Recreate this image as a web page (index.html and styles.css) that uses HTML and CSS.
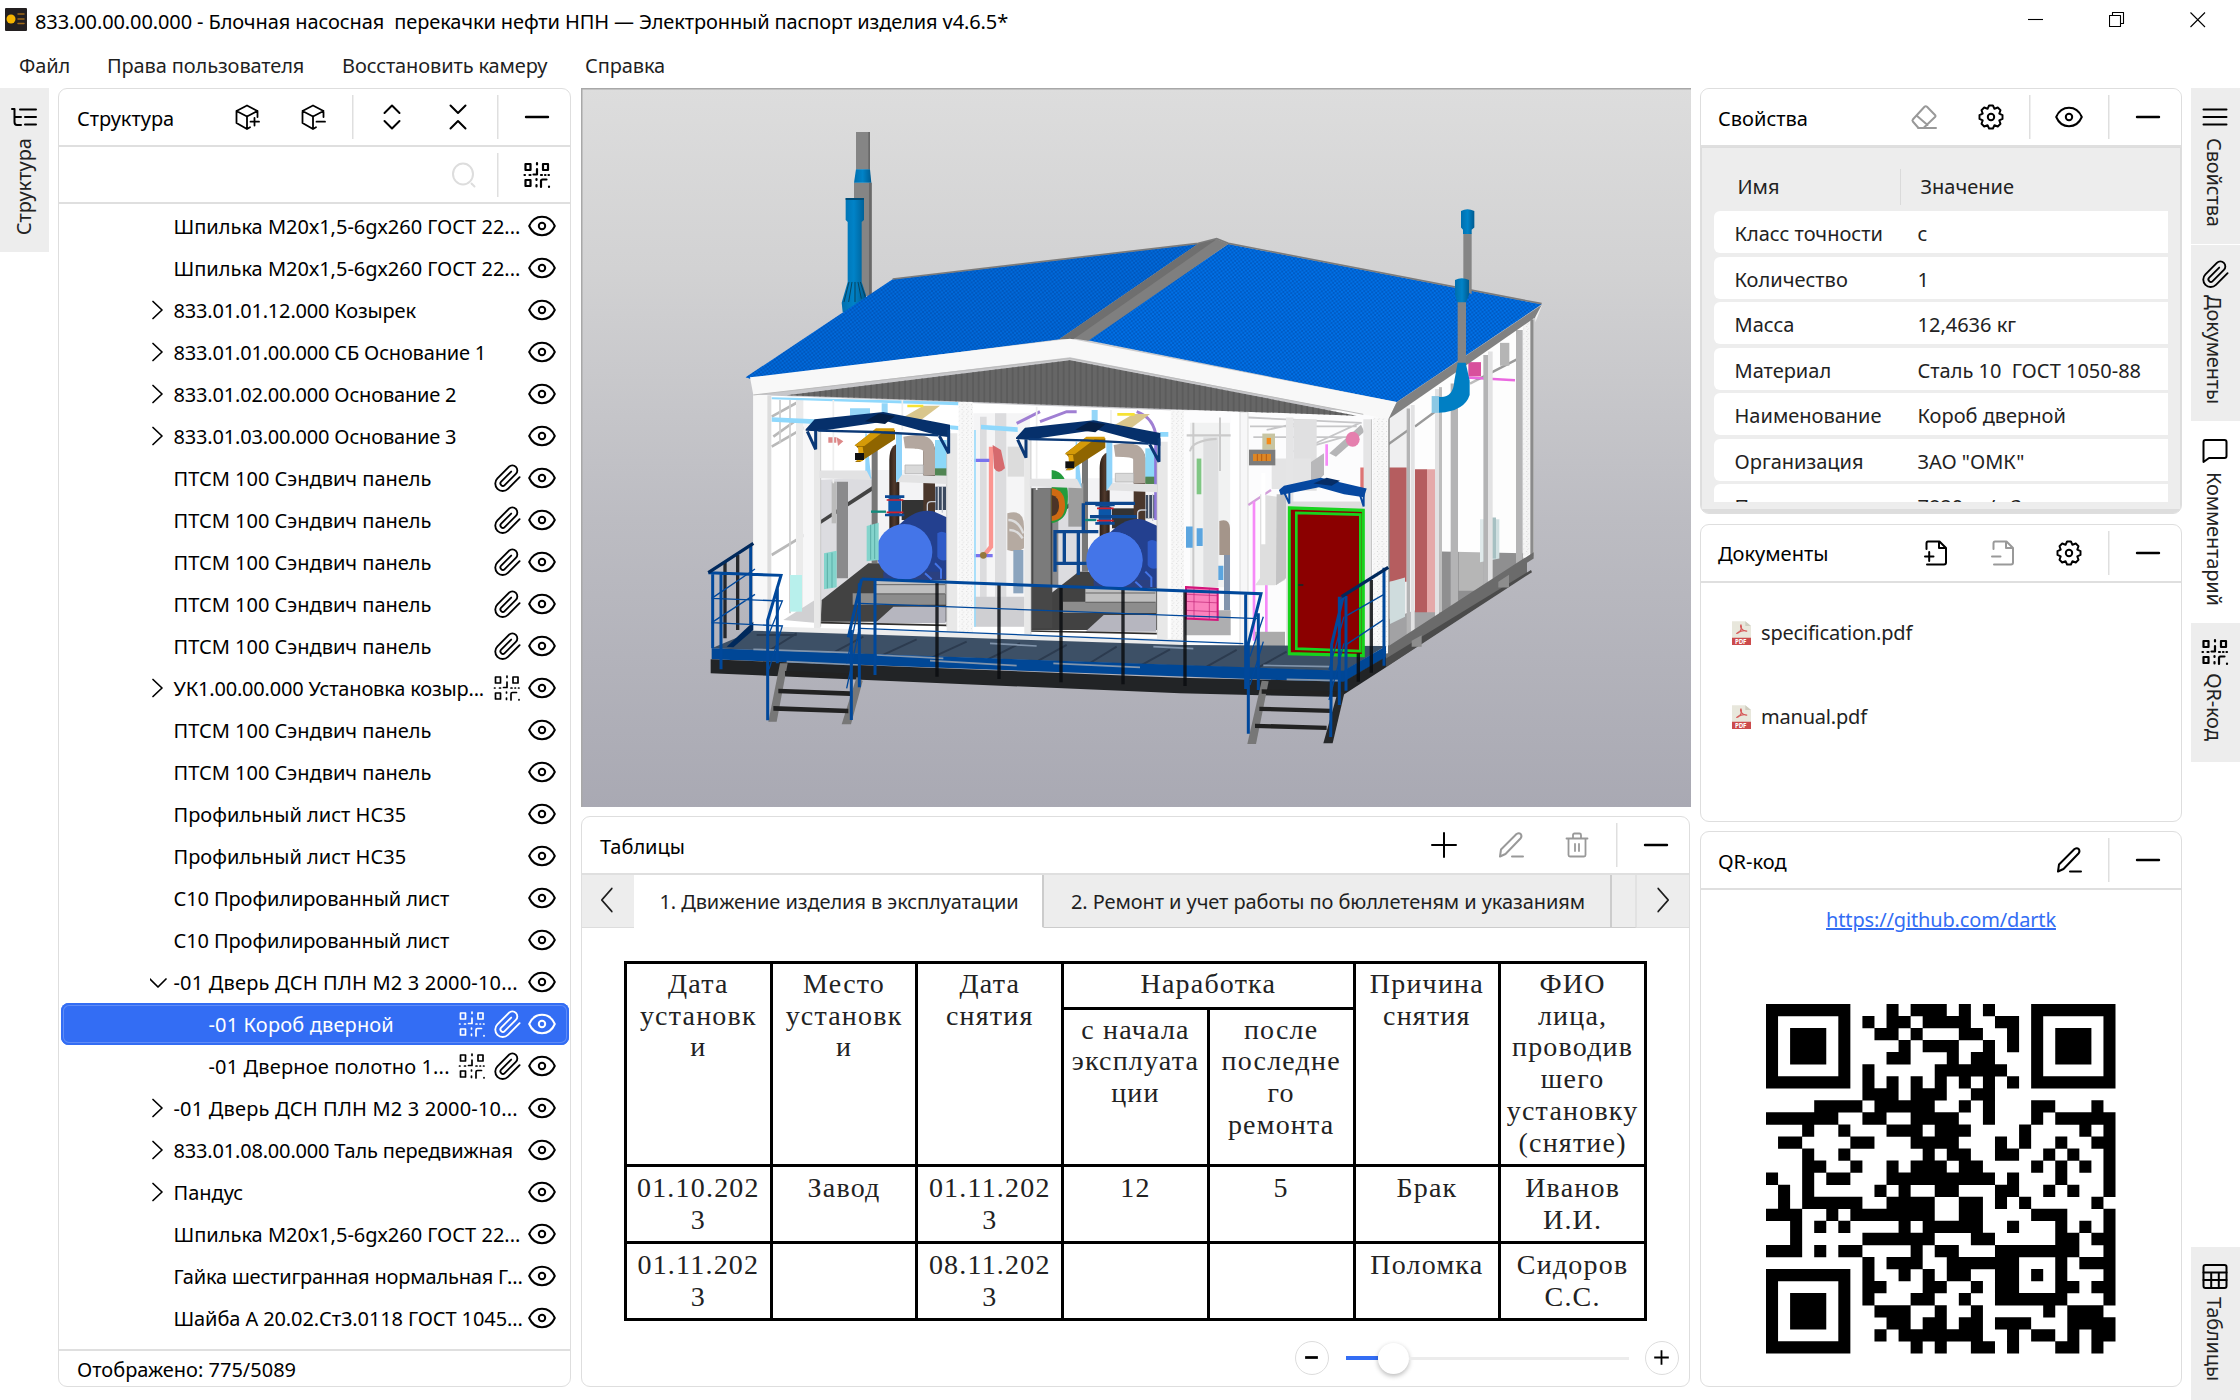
FILE: index.html
```html
<!DOCTYPE html>
<html lang="ru">
<head>
<meta charset="utf-8">
<title>Электронный паспорт изделия</title>
<link rel="stylesheet" href="styles.css">
</head>
<body>
<svg class="defs" width="0" height="0">
  <symbol id="eye" viewBox="0 0 28 28"><path d="M1.2 14C4 7.500 8.500 4.800 14 4.800s10 2.700 12.800 9.200C24 20.500 19.500 23.200 14 23.200S4 20.500 1.200 14z"/><circle cx="14" cy="14" r="3.200"/></symbol>
  <symbol id="clip" viewBox="0.500 0 24 24"><path d="M23.300 11.300l-10 10a6.300 6.300 0 0 1-9-9l9.800-9.800a4.200 4.200 0 0 1 6 6l-9.600 9.600a2.100 2.100 0 0 1-3-3l8.600-8.600" stroke-width="1.600"/></symbol>
  <symbol id="qr" viewBox="0 0 28 28"><path d="M2.500 3h5v6h-5zM20 3h5v6h-5zM2.500 19h5v6h-5zM14 2v1.500M14 8v5.500h-3.500M1.500 14h.5M6.500 14h1M18 14h1M22 14h.5M25.500 14h.5M13.500 18v1M13.500 24v1.500M18 26v-6q0-1.500 1.500-1.500h4M26 25.500v.5"/></symbol>
  <symbol id="gear" viewBox="-14 -14 28 28"><path transform="scale(.96)" d="M-2-12L2-12 3.570-8.620 7.070-9.900 9.900-7.070 8.620-3.570 12-2 12 2 8.620 3.570 9.900 7.070 7.070 9.900 3.570 8.620 2 12-2 12-3.570 8.620-7.070 9.900-9.900 7.070-8.620 3.570-12 2-12-2-8.620-3.570-9.900-7.070-7.070-9.900-3.570-8.620Z"/><circle r="3.200"/></symbol>
  <symbol id="minus" viewBox="0 0 28 28"><path d="M3 14h22" stroke-width="2.400"/></symbol>
  <symbol id="plus" viewBox="0 0 28 28"><path d="M14 2v24M2 14h24"/></symbol>
  <symbol id="cube-plus" viewBox="0 0 28 28"><path d="M14 26L3.500 20V8L14 2.500 24.500 8v6M3.500 8L14 13.500 24.500 8M14 13.500V26l3-1.800M21.500 15v7.500M17.500 18.700h8.500" stroke-width="1.800"/></symbol>
  <symbol id="cube-minus" viewBox="0 0 28 28"><path d="M14 26L3.500 20V8L14 2.500 24.500 8v6M3.500 8L14 13.500 24.500 8M14 13.500V26l3-1.800M17.500 18.700h8.500" stroke-width="1.800"/></symbol>
  <symbol id="expand" viewBox="0 0 28 28"><path d="M6.500 10L14 2.500 21.500 10M6.500 18l7.500 7.500 7.500-7.500"/></symbol>
  <symbol id="collapse" viewBox="0 0 28 28"><path d="M6.500 2.500L14 10l7.500-7.500M6.500 25.500L14 18l7.500 7.500"/></symbol>
  <symbol id="search" viewBox="0 0 28 28"><ellipse cx="13" cy="13" rx="10" ry="10.500"/><path d="M21.500 22.500l3 3"/></symbol>
  <symbol id="chev" viewBox="0 0 24 28"><path d="M3 5.500L12 14l-9 8.500" stroke-width="1.700"/></symbol>
  <symbol id="chev-open" viewBox="0 0 24 28"><path d="M0 11l8 8 8-8" stroke-width="1.700"/></symbol>
  <symbol id="eraser" viewBox="0 0 28 28"><path d="M8.500 25L2.800 18.500q-.8-1 0-2L14.500 3.800q1.200-1.200 2.500 0L25 12q1 1 0 2L13.500 25M6.500 12.500L17.500 22M8 25h18"/></symbol>
  <symbol id="pencil" viewBox="0 0 28 28"><path d="M3 25.500l1-7L19.500 3q2.500-1.500 4.200 0 1.500 2 0 4.200L8.500 23zM15 25.500h11"/></symbol>
  <symbol id="trash" viewBox="0 0 28 28"><path d="M3.500 7.500h21M5.500 7.500V24q0 1.500 1.500 1.500h14q1.500 0 1.500-1.500V7.500M10 7.500V4q0-1.500 1.500-1.500h5Q18 2.500 18 4v3.500M12 13v7M16 13v7" stroke-width="1.800"/></symbol>
  <symbol id="doc-plus" viewBox="0 0 28 28"><path d="M4.500 10V4.500Q4.500 2.500 6 2.500h11.500L24 9v14.500q0 2-2 2H5M17 2.500V9h7M3 17.500h8.500M7.200 13v9"/></symbol>
  <symbol id="doc-minus" viewBox="0 0 28 28"><path d="M4.500 10V4.500Q4.500 2.500 6 2.500h11.500L24 9v14.500q0 2-2 2H5M17 2.500V9h7M3 17.500h8.500"/></symbol>
  <symbol id="tree" viewBox="0 0 28 28"><path d="M2 6h2.500v13Q4.500 22 7 22h4M4.500 14H11M10 6.500h16M15 14h11M15 21.500h11"/></symbol>
  <symbol id="lines" viewBox="0 0 28 28"><path d="M2.500 6.500h23M2.500 14h23M2.500 21.500h23"/></symbol>
  <symbol id="comment" viewBox="0 0 28 28"><path d="M2.500 25V5Q2.500 3 4.500 3h19q2 0 2 2v14q0 2-2 2H8z"/></symbol>
  <symbol id="grid" viewBox="0 0 28 28"><rect x="2.500" y="3" width="23" height="23" rx="2"/><path d="M2.500 10.500h23M2.500 18h23M10.200 10.500V26M17.800 10.500V26"/></symbol>
  <symbol id="pdf" viewBox="0 0 20 25"><path d="M0 0h14l6 5v20H0z" fill="#e8e7dc" stroke="none"/><path d="M14 0v5h6z" fill="#cfcdbf" stroke="none"/><path d="M5 13c4-1 6-6 4.500-9C8 6 11 11 15.500 10.500 12 9 7 11 5 13z" stroke="#d65a5a" stroke-width="1.300"/><path d="M0 17.500h20V25H0z" fill="#cc4b4c" stroke="none"/><text x="3.200" y="23.700" font-size="6.500" font-weight="700" fill="#fff" stroke="none">PDF</text></symbol>
</svg>

<header class="titlebar">
  <svg class="app-icon" viewBox="0 0 22 23"><rect width="22" height="23" rx="1" fill="#231f20"/><circle cx="6" cy="11" r="4.500" fill="#f5b400"/><path d="M13 6h6M13 11h6M13 15.500h6" stroke="#a06a18" stroke-width="1.500"/></svg>
  <h1 class="title">833.00.00.00.000 - Блочная насосная&nbsp; перекачки нефти НПН — Электронный паспорт изделия v4.6.5*</h1>
  <div class="window-buttons">
    <svg viewBox="0 0 16 16"><path d="M0 7.500h15"/></svg>
    <svg viewBox="0 0 16 16"><path d="M.5 3.500h11v11H.5zM3.500 3.500v-3h11v11h-3"/></svg>
    <svg viewBox="0 0 16 16"><path d="M.5.500l14.500 14.500M15 .5L.5 15"/></svg>
  </div>
</header>
<nav class="menubar"><a class="m1">Файл</a><a class="m2">Права пользователя</a><a class="m3">Восстановить камеру</a><a class="m4">Справка</a></nav>

<main class="workspace">
  <aside class="rail rail-left"><div class="tab tab-structure"><svg class="icon"><use href="#tree"/></svg><span>Структура</span></div></aside>

  <section class="panel structure">
    <div class="head"><h2>Структура</h2>
      <i class="btn"><svg class="icon"><use href="#cube-plus"/></svg></i><i class="btn"><svg class="icon"><use href="#cube-minus"/></svg></i><i class="sep"></i>
      <i class="btn"><svg class="icon"><use href="#expand"/></svg></i><i class="btn"><svg class="icon"><use href="#collapse"/></svg></i><i class="sep"></i>
      <i class="btn"><svg class="icon"><use href="#minus"/></svg></i></div>
    <div class="search"><i class="btn pale"><svg class="icon"><use href="#search"/></svg></i><i class="sep"></i><i class="btn"><svg class="icon bold"><use href="#qr"/></svg></i></div>
    <ul class="tree">
      <li><b></b><span>Шпилька М20х1,5-6gх260 ГОСТ 22...</span><svg><use href="#eye"/></svg></li>
      <li><b></b><span>Шпилька М20х1,5-6gх260 ГОСТ 22...</span><svg><use href="#eye"/></svg></li>
      <li class="num"><b><svg><use href="#chev"/></svg></b><span>833.01.01.12.000 Козырек</span><svg><use href="#eye"/></svg></li>
      <li class="num"><b><svg><use href="#chev"/></svg></b><span>833.01.01.00.000 СБ Основание 1</span><svg><use href="#eye"/></svg></li>
      <li class="num"><b><svg><use href="#chev"/></svg></b><span>833.01.02.00.000 Основание 2</span><svg><use href="#eye"/></svg></li>
      <li class="num"><b><svg><use href="#chev"/></svg></b><span>833.01.03.00.000 Основание 3</span><svg><use href="#eye"/></svg></li>
      <li><b></b><span>ПТСМ 100 Сэндвич панель</span><svg><use href="#clip"/></svg><svg><use href="#eye"/></svg></li>
      <li><b></b><span>ПТСМ 100 Сэндвич панель</span><svg><use href="#clip"/></svg><svg><use href="#eye"/></svg></li>
      <li><b></b><span>ПТСМ 100 Сэндвич панель</span><svg><use href="#clip"/></svg><svg><use href="#eye"/></svg></li>
      <li><b></b><span>ПТСМ 100 Сэндвич панель</span><svg><use href="#clip"/></svg><svg><use href="#eye"/></svg></li>
      <li><b></b><span>ПТСМ 100 Сэндвич панель</span><svg><use href="#clip"/></svg><svg><use href="#eye"/></svg></li>
      <li class="num"><b><svg><use href="#chev"/></svg></b><span>УК1.00.00.000 Установка козыр...</span><svg class="thin"><use href="#qr"/></svg><svg><use href="#eye"/></svg></li>
      <li><b></b><span>ПТСМ 100 Сэндвич панель</span><svg><use href="#eye"/></svg></li>
      <li><b></b><span>ПТСМ 100 Сэндвич панель</span><svg><use href="#eye"/></svg></li>
      <li><b></b><span>Профильный лист НС35</span><svg><use href="#eye"/></svg></li>
      <li><b></b><span>Профильный лист НС35</span><svg><use href="#eye"/></svg></li>
      <li class="near"><b></b><span>С10 Профилированный лист</span><svg><use href="#eye"/></svg></li>
      <li class="near"><b></b><span>С10 Профилированный лист</span><svg><use href="#eye"/></svg></li>
      <li class="door"><b><svg><use href="#chev-open"/></svg></b><span>-01 Дверь ДСН ПЛН М2 3 2000-10...</span><svg><use href="#eye"/></svg></li>
      <li class="child selected"><span>-01 Короб дверной</span><svg class="thin"><use href="#qr"/></svg><svg><use href="#clip"/></svg><svg><use href="#eye"/></svg></li>
      <li class="child"><span>-01 Дверное полотно 1...</span><svg class="thin"><use href="#qr"/></svg><svg><use href="#clip"/></svg><svg><use href="#eye"/></svg></li>
      <li class="door"><b><svg><use href="#chev"/></svg></b><span>-01 Дверь ДСН ПЛН М2 3 2000-10...</span><svg><use href="#eye"/></svg></li>
      <li class="num"><b><svg><use href="#chev"/></svg></b><span>833.01.08.00.000 Таль передвижная</span><svg><use href="#eye"/></svg></li>
      <li><b><svg><use href="#chev"/></svg></b><span>Пандус</span><svg><use href="#eye"/></svg></li>
      <li><b></b><span>Шпилька М20х1,5-6gх260 ГОСТ 22...</span><svg><use href="#eye"/></svg></li>
      <li class="num"><b></b><span>Гайка шестигранная нормальная Г...</span><svg><use href="#eye"/></svg></li>
      <li class="near"><b></b><span>Шайба А 20.02.Ст3.0118 ГОСТ 1045...</span><svg><use href="#eye"/></svg></li>
    </ul>
    <footer>Отображено: 775/5089</footer>
  </section>

  <div class="center">
    <svg class="scene" viewBox="581 88 1110 719">
      <defs>
        <linearGradient id="sky" x1="0" y1="0" x2="0" y2="1"><stop offset="0" stop-color="#dddddd"/><stop offset=".25" stop-color="#d2d2d3"/><stop offset=".6" stop-color="#bcbcc2"/><stop offset="1" stop-color="#a9a9b3"/></linearGradient>
        <pattern id="tile" width="12" height="12" patternUnits="userSpaceOnUse" patternTransform="rotate(8)"><path d="M0 3h6M6 9h6" stroke="#003f94" stroke-width="2.500"/></pattern>
        <pattern id="ribs" width="17" height="17" patternUnits="userSpaceOnUse"><path d="M3 0v17" stroke="#585858" stroke-width="4"/></pattern>
        <pattern id="dots" width="14" height="14" patternUnits="userSpaceOnUse"><path d="M3 3l3 3M10 10l-3 3" stroke="#c4c4c4" stroke-width="2"/></pattern>
        <linearGradient id="pipe"><stop offset="0" stop-color="#006fae"/><stop offset=".5" stop-color="#0083c8"/><stop offset="1" stop-color="#005b90"/></linearGradient>
        <linearGradient id="brown"><stop offset="0" stop-color="#2b1e17"/><stop offset=".5" stop-color="#513a2d"/><stop offset="1" stop-color="#2b1e17"/></linearGradient>
        <g id="bay">
          <path d="M390 270h380v455H390z" fill="#f3f3f5"/>
          <path d="M392 300l155-10v295l-155 80z" fill="#dcdce0"/>
          <path d="M392 420l155-102v14L392 432z" fill="#444"/>
          <path d="M440 305h34v290h-34z" fill="#8a8a8c"/><path d="M545 180h18v370h-18z" fill="#777"/><path d="M425 305h14v125h-14z" fill="#bbb"/>
          <path d="M395 660l140-110h100v-10h135v185H392z" fill="#424242"/>
          <path d="M635 360h70v60h-70z" fill="#333"/>
          <path d="M598 450v-210q0-45 30-50v260z" fill="url(#brown)"/>
          <path d="M700 400V210q0-10-25-5l-5-25q60-15 65 30v190z" fill="#4a372c"/>
          <path d="M640 170q90-20 95 40v75h-35v-70q0-10-55-10z" fill="#b3a79f"/>
          <path d="M735 180h36v90h-36z" fill="#8cd8f8"/><path d="M735 265h36v22h-36z" fill="#518553"/>
          <path d="M585 350h58M585 405h58" stroke="#0b4a95" stroke-width="8"/><path d="M595 355h38v46h-38z" fill="#0b56a8"/><path d="M590 360h50M590 397h50" stroke="#d21f28" stroke-width="5"/><path d="M543 395h45" stroke="#138a7c" stroke-width="7"/>
          <path d="M736 320h32v70h-32z" fill="#3c4a60"/><path d="M712 395v-20q0-10 12-10h14M745 320v70M757 318v80" fill="none" stroke="#c8ccd4" stroke-width="4"/>
          <path d="M620 442q55-60 110-48l40 18v185l-60 5z" fill="#23408f"/><path d="M742 460q12-10 28 0v80q-20 5-28-10z" fill="#2f5bc8"/>
          <path d="M580 575h180v25H580z" fill="#2b4080"/><circle cx="643" cy="516" r="84" fill="#4475e8"/>
          <path d="M735 550l18 18v28M705 580l20 18" stroke="#4475e8" stroke-width="6" fill="none"/>
          <path d="M555 600h212v42H555z" fill="#bfbfbf"/><path d="M488 640h279v34H488z" fill="#8d8d8d"/><path d="M555 614h210M555 642h210" stroke="#666" stroke-width="3"/><path d="M610 680h157v50H555z" fill="#b6b6bf"/>
          <path d="M390 728l380 8" stroke="#302e2c" stroke-width="5"/>
        </g>
        <g id="bay-front">
          <path d="M530 160l14 140-18-20V160zM618 160h18v130l-18 18z" fill="#8fd4fb"/>
          <path d="M372 150h20v600h-20zM770 160h32v600h-32z" fill="#e8e8e8"/><path d="M392 150v590M770 200v540" stroke="#bbb" stroke-width="2"/>
          <path d="M388 272h142l14 28-156-6zM636 284l134 4v24l-150-6z" fill="#e2e2e3"/>
          <path d="M645 255h55v26h-55z" fill="#d9d9d9" stroke="#aaa"/>
          <path d="M495 195l60-45h60v28l-105 68h-15l12-10v-28z" fill="#8f6500"/><path d="M493 198h30l60-45h30v-8h-55z" fill="#d49a08"/><path d="M498 244h18l7-6-5-38h-14l3 36z" fill="#e0a30c"/><path d="M495 219h27v21h-27z" fill="#111"/>
          <path d="M347 148l27-30 206-22 200 38v38l-30-4-160-44-205 30-38-2z" fill="#06306b"/><path d="M525 124l42-24 48 8-30 24z" fill="#051f45"/>
          <path d="M385 152l170 4 190 10" stroke="#0a3876" stroke-width="7" fill="none"/><path d="M352 154l25 54v-55M748 168l28 52v-70" fill="none" stroke="#0a3876" stroke-width="9"/>
        </g>
      </defs>
      <rect x="581" y="88" width="1110" height="719" fill="url(#sky)"/>
      <path d="M581 88.500h1110M581.500 88v719" stroke="#a8a8a8" fill="none"/>

      <!-- rear chimneys -->
      <g transform="translate(700 110) scale(.33333)">
        <path d="M468 66h42v112h-42zM462 218h53v340h-53z" fill="#858585"/><path d="M505 66h5v112h-5zM507 218h8v340h-8z" fill="#696969"/>
        <path d="M468 178h42l4 40h-52z" fill="url(#pipe)"/><path d="M437 264h55v66l-7 6v180l13 40v50h-70l-3-28 18-62V336l-6-6z" fill="url(#pipe)"/>
        <path d="M437 264h55v6h-55z" fill="#004d78"/><path d="M447 516l-15 60M456 516l-10 60M465 516v60M474 516l10 50M481 516l15 46" stroke="#06435f" stroke-width="3"/>
      </g>

      <!-- side wall -->
      <g transform="translate(1180 180) scale(.33333 .35714)">
        <path d="M622 665l440-285v675L618 1340z" fill="#fdfdfd"/>
        <path d="M630 660l60-40v580l-60 60z" fill="#efeff0"/>
        <path d="M785 1040l245 5v45L785 1220z" fill="#8f8f90"/><path d="M625 1230l160-50v50l-160 110z" fill="#a2a2a4"/>
        <path d="M625 805h55v320h-55z" fill="#b55d5f"/><path d="M705 810h36v400h-36z" fill="#b55d5f"/><path d="M741 810h24v400h-24z" fill="#e5a9a9"/>
        <path d="M630 1125l45-12v110l-45 20z" fill="#cfdcdd"/><path d="M900 950h58v110l-58 10z" fill="#cfdfe0"/><path d="M930 945h18v115h-18z" fill="#a6c0c2"/>
        <path d="M625 740l60-40M705 690l70-48M870 570l145-70" stroke="#9a9a9a" stroke-width="7"/><path d="M860 553l145 8" stroke="#ea68e0" stroke-width="7"/><path d="M865 510h38v40h-38z" fill="#d8509c"/><path d="M960 456h28v64h-28z" fill="#b5b5b5"/>
        <path d="M680 640h10v640h-10zM812 570h22v640h-22zM910 490h14v650h-14zM1008 420h20v660h-20z" fill="#b4b4b5"/>
        <path d="M692 630h12v640h-12zM765 585h12v640h-12zM924 480h14v650h-14z" fill="#e2e2e3"/><path d="M777 580h9v630h-9z" fill="#bdbdbd"/>
        <path d="M836 560h74v590h-74z" fill="#fff" opacity=".35"/><path d="M1029 408l22-14v650l-22 14z" fill="#f5f5f5"/><path d="M1029 408l22-14v650l-22 14z" fill="url(#dots)"/><path d="M1051 390h10v665h-10z" fill="#8b8b8b"/>
        <path d="M622 665h7v665h-9z" fill="#858585"/>
        <path d="M618 1310l443-268v18l-20 12v30l-423 262z" fill="#6b6b6b"/><path d="M618 1340l435-248 3 6-438 266z" fill="#4b4b4b"/>
        <path d="M955 1125l32-20v36h-32zM695 1290l30-15v32h-30z" fill="#8d8d8d"/>
        <path d="M1086 350l-20 48v-30z" fill="#f2f2f2"/>
      </g>

      <!-- front wall interior -->
      <g transform="translate(690 380) scale(.33333)">
        <path d="M190 45l1905 70v680L190 750z" fill="#fff"/>
        <path d="M245 200l120-70M245 110l90-50M245 525l140-85M250 170l70-50" stroke="#b9b9b9" stroke-width="8"/>
        <path d="M318 60h22v640h-22z" fill="#ebebeb"/><path d="M300 60v640M270 60v130" stroke="#ccc" stroke-width="5"/>
        <path d="M340 130h32v560h-32z" fill="#f7f7f8"/>
        <path d="M280 720l110-70v80z" fill="#d0d0d2"/><path d="M300 585h36v110h-36z" fill="#b8f0ec"/>
        <use href="#bay"/>
        <path d="M402 520l38-8v110l-38 6zM530 438l36-10v112l-36 4z" fill="#84d4cc"/><path d="M412 520v105M426 518v105M542 434v105M554 432v105" stroke="#5aaea8" stroke-width="3"/>
        <path d="M850 100h170v640H850z" fill="#f5f5f6"/>
        <path d="M870 110h20v590h-20zM915 100h34v600h-34z" fill="#dcdcde"/><path d="M953 200h50v90h-50z" fill="#dcdcdc"/>
        <path d="M903 200v300l-20 25" stroke="#fb9590" stroke-width="13" fill="none"/><path d="M908 195l25 15 12 55q-20 20-33 0z" fill="#d66a6e"/>
        <path d="M853 241h45M853 527h55" stroke="#7a73ee" stroke-width="10"/><circle cx="880" cy="526" r="10" fill="#94783c"/>
        <path d="M952 400q50-15 50 40v65q-20 15-50 5z" fill="#b5aaa1"/><path d="M955 420q30 0 45 40M958 450q25 0 40 25" stroke="#ddd" stroke-width="7" fill="none"/>
        <path d="M970 510h30v130h-30z" fill="#8ba4be"/><path d="M853 650h150v90H853z" fill="#cfcfd2"/><path d="M855 150v590" stroke="#9adafa" stroke-width="5"/>
        <path d="M980 130l70-35M1050 125l80-30h30M1340 95q55 20 58 80" stroke="#a07fd3" stroke-width="9" fill="none"/>
        <use href="#bay" x="631" y="25"/>
        <path d="M1022 325h65v420h-65z" fill="#474747"/><path d="M1030 325h52v290h-52z" fill="#7b7b7b"/><path d="M1135 310h45v130h-45z" fill="#9d9d9d"/>
        <path d="M1085 270q55 5 48 100 0 50-48 60z" fill="#239b3d"/><path d="M1085 325q40 5 40 50t-40 48z" fill="#cf6a12"/><path d="M1085 345q22 5 22 32t-22 32z" fill="#4b3427"/>
        <path d="M1090 455h135M1090 550h100M1095 460v115M1123 460v90M1165 460v125M1185 370h150M1180 370v80M1200 410h140" stroke="#0d478f" stroke-width="10" fill="none"/>
        <circle cx="1273" cy="540" r="84" fill="#4475e8"/>
        <path d="M245 52l560 14v10L245 58zM245 112l130 6v14l-130-7zM780 136l25 2v12l-25-2zM873 134l110 8v14l-110-8zM1410 156h25v14h-25z" fill="#8fd8fc"/>
        <path d="M480 85h60v30h-60zM575 70h18v40h-18zM1205 90h18v40h-18z" fill="#94d6f8"/>
        <path d="M640 112l60-35h50l-60 45zM1270 137l60-35h50l-60 45z" fill="#d9c68c"/><path d="M652 78h48M1282 103h52" stroke="#f6e234" stroke-width="8"/>
        <path d="M415 172h24v16h-24zM440 172l20 12-16 14z" fill="#d88"/>
        <path d="M430 60v250M637 60v90M1040 80v250M1263 90v60" stroke="#eee" stroke-width="5"/>
        <path d="M1397 190v230" stroke="#8f78da" stroke-width="9"/>
        <use href="#bay-front"/><use href="#bay-front" x="631" y="25"/>
        <path d="M190 45h42v705h-42zM806 66h42v700h-42zM1442 90h40v700h-40z" fill="#f8f8f8"/><path d="M806 66h42v700h-42zM1442 90h40v700h-40z" fill="url(#dots)"/><path d="M232 48h12v700h-12z" fill="#ddd"/>
        <path d="M190 738l1290 40v22L190 758z" fill="#ececec"/>
      </g>

      <!-- right bay and entrance door -->
      <g transform="translate(1180 180) scale(.33333 .35714)">
        <path d="M12 645h612v680H12z" fill="#fcfcfd"/>
        <path d="M30 680h120v460H30z" fill="#f1f2f2"/><path d="M70 720h45v420H70z" fill="#dedfe0"/><path d="M20 715h160M40 680v460M30 760q5-30 80-35M120 665v150" stroke="#cacaca" stroke-width="6" fill="none"/>
        <path d="M50 780h14v100H50z" fill="#80c784"/><path d="M118 955q30-10 32 20v75h-32z" fill="#a4958a"/><path d="M132 1050h18v155h-18z" fill="#8294ad"/><path d="M18 970h20v60H18zM50 975h18v50H50zM115 1080h15v40h-15z" fill="#5ba5df"/>
        <path d="M15 1205h160v70H15z" fill="#aeaeb0"/>
        <path d="M152 650h28v640h-28z" fill="#fff"/>
        <path d="M180 650h24v660h-24z" fill="#f7f7f8" stroke="#ccc"/><path d="M205 665l340 15M210 690h320M220 720h290M260 700l120-25M400 740l140-60M340 760l150-40" stroke="#c6c6c8" stroke-width="5"/>
        <path d="M340 670h70v200h-70z" fill="#e0e0e1"/><path d="M392 790l40-25v60l-40 40z" fill="#b8b8ba"/><path d="M275 780h118v85H275z" fill="#e4e4e5"/>
        <path d="M448 765l95-80 10 20-85 70z" fill="#b5b5b7"/><circle cx="518" cy="726" r="21" fill="#e57fae"/>
        <path d="M247 710h38v45h-38z" fill="#c7c5a3"/><path d="M207 755h79v44h-79z" fill="#7c7c7c"/><path d="M219 767h54v20h-54z" fill="#dc8726"/><path d="M260 722h13v18h-13z" fill="#f48b18"/><path d="M232 767v20M245 767v20M259 767v20" stroke="#b85c12" stroke-width="3"/>
        <path d="M205 910l68-42" stroke="#d29fd9" stroke-width="7"/><path d="M222 900v390M259 1130v140M440 740v60" stroke="#f68af8" stroke-width="8"/>
        <path d="M240 880l75 10v230l-30 15h-60l15-20z" fill="#dedede"/><path d="M290 880h28v235l-30 20z" fill="#c3c3c4"/><path d="M250 820v200" stroke="#fff" stroke-width="12"/><path d="M225 1265h90v45h-90z" fill="#aaa"/>
        <path d="M318 665h22v650h-22zM550 670h22v650h-22z" fill="#e5e5e6"/><path d="M541 805h10v60h-10z" fill="#dd7474"/><path d="M325 900h225v25H325z" fill="#ddd"/>
        <path d="M580 665h42v660h-42z" fill="#f8f8f8"/><path d="M580 665h42v660h-42z" fill="url(#dots)"/><path d="M574 670v650" stroke="#bbb" stroke-width="3"/>
        <path d="M297 868l15-12 110-22 138 30-8 24-60-8-75-20-115 22z" fill="#0648a0"/><path d="M400 850l40-16 40 8-25 14z" fill="#062d66"/><path d="M314 878l14 28v-35M540 882l11 32v-40" stroke="#0648a0" stroke-width="6" fill="none"/>
        <path d="M18 1140l95 5v87l-95-4z" fill="#fb82bd" stroke="#d3157b" stroke-width="6"/><path d="M18 1160l95 4M18 1180l95 4M18 1205l95 4M42 1142v88M88 1142v88" stroke="#c02678" stroke-width="2"/>
      </g>

      <!-- gable and roof -->
      <g transform="translate(700 110) scale(.33333)">
        <path d="M260 856l850-105 860 166z" fill="#666"/><path d="M260 856l850-105 860 166z" fill="url(#ribs)"/>
        <path d="M137 802L578 508l917-107-417 287-928 118z" fill="#0069da"/>
        <path d="M137 802L578 508l917-107-417 287-928 118z" fill="url(#tile)"/>
        <path d="M1160 690L1585 402l940 181-435 293z" fill="#0070e6"/>
        <path d="M1160 690L1585 402l940 181-435 293z" fill="url(#tile)"/>
        <path d="M578 507L1495 400l55-14 35 14 940 181" stroke="#7b7b7b" stroke-width="5" fill="none"/>
        <path d="M1078 688l417-287 55-13 35 14-420 290-55-8z" fill="#7f7f7f"/>
        <path d="M1078 688l417-287 55-13L1120 688z" fill="#6f6f6f"/>
        <path d="M150 802l960-116 980 190-24 52-956-186-950 113z" fill="#f8f8f8"/><path d="M160 855l950-110 880 168" fill="none" stroke="#bbb" stroke-width="3"/>
      </g>
      <g transform="translate(1180 180) scale(.33333 .35714)">
        <path d="M650 622L1085 350l-20 35-440 285z" fill="#818181"/>
        <path d="M850 150h25v170l-25-12z" fill="#858585"/><path d="M843 87q19-10 40 0v46l-8 6v12h-26v-12l-6-6z" fill="url(#pipe)"/>
        <path d="M833 340h25v175h-25z" fill="#858585"/><path d="M825 280q20-10 42 0v42l-9 20h-26l-7-20z" fill="url(#pipe)"/>
        <path d="M833 512h24l12 50v40q-15 45-92 50l-2-45q45 5 48-45z" fill="#007fc4"/><path d="M755 605h22v47h-22z" fill="#8bc8e4"/>
      </g>

      <!-- platform deck and stairs -->
      <g transform="translate(690 380) scale(.33333)">
        <path d="M190 752L1480 795l608 3-128 76L65 805z" fill="#3d5066"/>
        <path d="M200 765h120M320 760l-80 50M520 770l-150 80M680 778l-130 60M830 785l-110 50M990 790l-110 55M1130 795l-90 50M1280 800l-90 55M1440 808l-90 50M1640 810l-90 50M1790 815l-90 50" stroke="#2c3b4f" stroke-width="6"/>
        <path d="M65 805l1605 57 290 10 128-74v34l-128 75L65 838z" fill="#004796"/><path d="M62 838l1408 55 490 12 128-75v32l-138 89-480-11L62 880z" fill="#222426"/>
        <path d="M190 808l290 10M290 845l220 10M560 825l200 10M720 842l260 15M1090 850l260 12M900 790l140 8M1390 800l120 6M1720 856l200 4M1790 898l160 4" stroke="#8295ac" stroke-width="5"/>
        <path d="M110 800l80-75v25l-60 52z" fill="#00295c"/>
        <path d="M270 850l-35 175h25l33-175zM500 890l-45 143h28l35-130z" fill="#777"/><path d="M285 873l210 8v14l-210-8zM265 926l215 8v14l-215-8zM250 978l225 8v14l-225-8z" fill="#222"/>
        <path d="M1715 902l-43 190h26l38-188z" fill="#777"/><path d="M1945 930l-45 160h28l35-150z" fill="#26282a"/><path d="M1715 928l225 6v13l-225-6zM1708 980l215 6v13l-215-6zM1695 1031l215 6v13l-215-6z" fill="#222"/>
      </g>

      <!-- door leaf -->
      <g transform="translate(1180 180) scale(.33333 .35714)">
        <path d="M328 918l222 7v407l-222-6z" fill="#8b0000" stroke="#18d31d" stroke-width="9"/><path d="M349 932l192 5v382l-192-7z" fill="#8b0000" stroke="#18d31d" stroke-width="8"/><path d="M355 1134h15" stroke="#222" stroke-width="5"/>
      </g>

      <!-- railings -->
      <g transform="translate(690 380) scale(.33333)">
        <g fill="none" stroke="#0b0d10" stroke-opacity=".85" stroke-width="10"><path d="M105 545v230M143 525v225M741 605v285M927 612v285M1113 622v285M1299 630v283M1485 635v283M2044 600v278M2005 820v85"/></g>
        <g fill="none" stroke="#00489b" stroke-width="9"><path d="M55 578l218 8-40 135v300M68 580v225M93 580v288M182 495v240M262 620v230M515 597l-40 175M508 610v312M555 600v285M484 750v270"/><path d="M515 597l1198 44-38 150v270M1667 643v284M1705 700v230"/><path d="M1960 648l-35 145-3 278M1948 650v325M1968 648v284M2082 563v294"/></g>
        <path d="M55 578L190 490M1955 650l140-88" stroke="#00295c" stroke-width="10"/>
        <g fill="none" stroke="#00489b" stroke-width="4"><path d="M65 655l212 8-45 110M65 728l212 10-40 130M65 655l130-88M65 728l130-85M510 670l1195 46M510 745l1150 46M508 670l-38 180M508 745l-38 180M1720 710l-40 120M1720 785l-40 130M1970 707l112-64M1970 793l112-75M1962 710l-45 160M1962 790l-45 170"/></g>
      </g>
    </svg>

    <section class="panel tables">
      <div class="head"><h2>Таблицы</h2>
        <i class="btn"><svg class="icon"><use href="#plus"/></svg></i><i class="btn muted"><svg class="icon"><use href="#pencil"/></svg></i><i class="btn muted"><svg class="icon"><use href="#trash"/></svg></i><i class="sep"></i><i class="btn"><svg class="icon"><use href="#minus"/></svg></i></div>
      <div class="tabs">
        <i class="arrow"><svg viewBox="0 0 28 28"><path d="M18.500 2.500L5 14l13.500 11.500" transform="translate(4 0) scale(.75 1)"/></svg></i>
        <span class="t1">1. Движение изделия в эксплуатации</span><span class="t2">2. Ремонт и учет работы по бюллетеням и указаниям</span><span class="t3"></span>
        <i class="arrow"><svg viewBox="0 0 28 28"><path d="M9.500 2.500L23 14 9.500 25.500" transform="translate(2 0) scale(.75 1)"/></svg></i>
      </div>
      <table>
        <tr class="h1"><td rowspan="2">Дата<br>установк<br>и</td><td rowspan="2">Место<br>установк<br>и</td><td rowspan="2">Дата<br>снятия</td><td colspan="2">Наработка</td><td rowspan="2">Причина<br>снятия</td><td rowspan="2">ФИО<br>лица,<br>проводив<br>шего<br>установку<br>(снятие)</td></tr>
        <tr class="h2"><td>с начала<br>эксплуата<br>ции</td><td>после<br>последне<br>го<br>ремонта</td></tr>
        <tr class="r"><td>01.10.202<br>3</td><td>Завод</td><td>01.11.202<br>3</td><td>12</td><td>5</td><td>Брак</td><td>Иванов<br>И.И.</td></tr>
        <tr class="r"><td>01.11.202<br>3</td><td></td><td>08.11.202<br>3</td><td></td><td></td><td>Поломка</td><td>Сидоров<br>С.С.</td></tr>
      </table>
      <div class="zoom"><i class="round"><svg viewBox="0 0 34 34"><path d="M10 17h14" stroke-width="3"/></svg></i><div class="track"><i class="fill"></i><i class="knob"></i><i class="rest"></i></div><i class="round"><svg viewBox="0 0 34 34"><path d="M9 17h16M17 9v16"/></svg></i></div>
    </section>
  </div>

  <div class="right">
    <section class="panel props">
      <div class="head"><h2>Свойства</h2><i class="btn muted"><svg class="icon"><use href="#eraser"/></svg></i><i class="btn"><svg class="icon"><use href="#gear"/></svg></i><i class="sep"></i><i class="btn"><svg class="icon"><use href="#eye"/></svg></i><i class="sep"></i><i class="btn"><svg class="icon"><use href="#minus"/></svg></i></div>
      <div class="prop-body">
        <div class="prop-head"><span>Имя</span><span>Значение</span></div>
        <div class="prop-list">
          <div class="prop"><span>Класс точности</span><span>с</span></div>
          <div class="prop"><span>Количество</span><span>1</span></div>
          <div class="prop"><span>Масса</span><span>12,4636 кг</span></div>
          <div class="prop"><span>Материал</span><span>Сталь 10&nbsp; ГОСТ 1050-88</span></div>
          <div class="prop"><span>Наименование</span><span>Короб дверной</span></div>
          <div class="prop"><span>Организация</span><span>ЗАО "ОМК"</span></div>
          <div class="prop"><span>Плотность</span><span>7820 кг/м3</span></div>
        </div>
      </div>
    </section>
    <section class="panel docs">
      <div class="head"><h2>Документы</h2><i class="btn"><svg class="icon"><use href="#doc-plus"/></svg></i><i class="btn muted"><svg class="icon"><use href="#doc-minus"/></svg></i><i class="btn"><svg class="icon"><use href="#gear"/></svg></i><i class="sep"></i><i class="btn"><svg class="icon"><use href="#minus"/></svg></i></div>
      <div class="doc"><svg><use href="#pdf"/></svg><span>specification.pdf</span></div>
      <div class="doc"><svg><use href="#pdf"/></svg><span>manual.pdf</span></div>
    </section>
    <section class="panel qrcode">
      <div class="head"><h2>QR-код</h2><i class="btn"><svg class="icon"><use href="#pencil"/></svg></i><i class="sep"></i><i class="btn"><svg class="icon"><use href="#minus"/></svg></i></div>
      <a class="link">https://github.com/dartk</a>
      <svg class="code" viewBox="0 0 29 29"><path transform="translate(0 .5)" fill="none" stroke="#000" stroke-width="1.020" d="M0 0h7M10 0h1M12 0h3M16 0h1M18 0h1M22 0h7
M0 1h1M6 1h1M8 1h1M10 1h2M13 1h4M19 1h2M22 1h1M28 1h1
M0 2h1M2 2h3M6 2h1M9 2h2M12 2h1M16 2h2M20 2h1M22 2h1M24 2h3M28 2h1
M0 3h1M2 3h3M6 3h1M11 3h1M13 3h3M18 3h1M20 3h1M22 3h1M24 3h3M28 3h1
M0 4h1M2 4h3M6 4h1M10 4h2M15 4h1M17 4h2M22 4h1M24 4h3M28 4h1
M0 5h1M6 5h1M8 5h1M14 5h6M22 5h1M28 5h1
M0 6h7M8 6h1M10 6h1M12 6h1M14 6h1M16 6h1M18 6h1M20 6h1M22 6h7
M8 7h3M12 7h3M17 7h2
M4 8h4M9 8h5M16 8h1M18 8h1M22 8h2M27 8h1
M0 9h6M8 9h2M12 9h4M18 9h1M22 9h1M24 9h5
M3 10h1M6 10h1M10 10h3M14 10h3M21 10h1M26 10h1M28 10h1
M1 11h2M7 11h2M12 11h4M19 11h1M21 11h1M24 11h1M27 11h2
M3 12h1M6 12h1M13 12h1M15 12h2M19 12h2M23 12h1M25 12h1M28 12h1
M3 13h2M7 13h1M10 13h1M12 13h3M16 13h2M22 13h1M24 13h1M26 13h1M28 13h1
M0 14h1M3 14h1M5 14h2M10 14h9M20 14h1M24 14h1M28 14h1
M1 15h1M3 15h1M9 15h1M11 15h1M14 15h2M19 15h2M23 15h1M25 15h1M28 15h1
M1 16h1M3 16h5M10 16h4M16 16h2M19 16h1M21 16h1M27 16h1
M0 17h3M5 17h1M7 17h7M16 17h2M22 17h3M28 17h1
M2 18h1M4 18h1M6 18h1M11 18h1M13 18h5M20 18h1M24 18h1M26 18h1M28 18h1
M2 19h1M8 19h6M17 19h2M24 19h2M27 19h2
M0 20h3M4 20h1M6 20h2M12 20h1M14 20h2M19 20h7M28 20h1
M8 21h1M10 21h3M15 21h6M24 21h1M26 21h3
M0 22h7M8 22h1M11 22h1M13 22h1M15 22h2M19 22h2M22 22h1M24 22h1M28 22h1
M0 23h1M6 23h1M8 23h2M13 23h2M17 23h1M19 23h2M24 23h2M27 23h2
M0 24h1M2 24h3M6 24h1M8 24h1M12 24h2M16 24h1M19 24h6M28 24h1
M0 25h1M2 25h3M6 25h1M9 25h3M14 25h1M17 25h1M23 25h1M25 25h3
M0 26h1M2 26h3M6 26h1M10 26h2M13 26h2M16 26h2M19 26h3M25 26h4
M0 27h1M6 27h1M9 27h1M11 27h7M20 27h1M22 27h2M25 27h1M27 27h2
M0 28h7M12 28h1M14 28h1M17 28h2M20 28h1M24 28h2M27 28h1"/></svg>
    </section>
  </div>

  <aside class="rail rail-right">
    <div class="tab s1"><svg class="icon"><use href="#lines"/></svg><span>Свойства</span></div>
    <div class="tab s2"><svg class="icon"><use href="#clip"/></svg><span>Документы</span></div>
    <div class="tab s3"><svg class="icon"><use href="#comment"/></svg><span>Комментарий</span></div>
    <div class="tab s4"><svg class="icon bold"><use href="#qr"/></svg><span>QR-код</span></div>
    <div class="tab s5"><svg class="icon"><use href="#grid"/></svg><span>Таблицы</span></div>
  </aside>
</main>
</body>
</html>
```
FILE: styles.css
```css
* { box-sizing: border-box; }
html, body { margin: 0; width: 2240px; height: 1400px; overflow: hidden; background: #fff; }
body { font-family: "Noto Sans", "Open Sans", sans-serif; font-size: 20px; line-height: 28px; color: #000; display: flex; flex-direction: column; }
h1, h2 { margin: 0; font-size: inherit; font-weight: 400; }
i { font-style: normal; }
.defs { position: absolute; }
svg { fill: none; stroke: currentColor; stroke-width: 2; stroke-linecap: round; stroke-linejoin: round; flex: none; display: block; }
.icon { width: 28px; height: 28px; }
.bold { stroke-width: 2.2; }

.titlebar { height: 42px; display: flex; align-items: center; padding-left: 5px; }
.app-icon { width: 22px; height: 23px; margin-top: -3px; stroke: none; }
.title { margin-left: 8px; flex: 1; white-space: nowrap; letter-spacing: -.11px; padding-top: 2px; }
.window-buttons { display: flex; gap: 65px; padding-right: 34px; margin-top: -3px; }
.window-buttons svg { width: 16px; height: 16px; stroke-width: 1.1; stroke-linecap: butt; }
.menubar { height: 46px; display: flex; color: #1f1f1f; padding: 10px 0 0 19px; letter-spacing: -.12px; }
.menubar a { white-space: nowrap; }
.m1 { width: 88px; } .m2 { width: 235px; } .m3 { width: 243px; }

.workspace { height: 1312px; display: flex; }
.rail { width: 49px; flex: none; display: flex; flex-direction: column; }
.tab { background: #ededed; width: 49px; padding-top: 15px; display: flex; flex-direction: column; align-items: center; gap: 7px; color: #000; }
.tab span { writing-mode: vertical-rl; color: #222; white-space: nowrap; line-height: 28px; }
.tab-structure { height: 164px; padding-right: 1px; }
.tab-structure span { transform: rotate(180deg); }
.rail-right .tab { padding-right: 1px; }
.rail-right span { margin-right: 3px; letter-spacing: -.15px; }
.s1 { height: 156px; margin-bottom: 1px; } .s2 { height: 176px; } .s3 { height: 202px; background: #fff; padding-top: 16px; }
.s4 { height: 139px; } .s5 { height: 153px; margin-top: auto; }

.panel { border: 1.500px solid #dedede; border-radius: 9px; background: #fff; display: flex; flex-direction: column; overflow: hidden; }
.head { height: 58px; flex: none; display: flex; align-items: center; padding-left: 18px; border-bottom: 2px solid #dfdfdf; }
.head h2 { flex: 1; padding-top: 3px; }
.btn { width: 66.500px; flex: none; display: flex; justify-content: center; }
.sep { width: 12px; flex: none; height: 44px; background: linear-gradient(#dfdfdf, #dfdfdf) center / 1.500px 100% no-repeat; }
.muted { color: #999; }
.pale { color: #ddd; margin-right: -6px; padding-right: 0; }

.structure { width: 513px; height: 1299px; margin-left: 9px; flex: none; }
.search { height: 57px; flex: none; display: flex; align-items: center; justify-content: flex-end; border-bottom: 2px solid #dfdfdf; }
.tree { list-style: none; margin: 1px 1.500px 0; padding: 0; flex: 1; }
.tree li { height: 42px; display: flex; align-items: center; gap: 7px; padding: 0 12.500px 0 89px; color: #000; }
.tree li > svg { width: 28px; height: 28px; }
.tree li > .thin { stroke-width: 1.7; }
.tree b { width: 24px; height: 28px; margin-right: -7px; flex: none; }
.tree b svg { width: 24px; height: 28px; overflow: visible; }
.tree span { flex: 1; min-width: 0; white-space: nowrap; padding-top: 1px; }
.tree .num { letter-spacing: -.18px; }
.tree .near { letter-spacing: -.1px; }
.tree .door { letter-spacing: .18px; }
.tree .child { padding-left: 148px; letter-spacing: .15px; }
.tree .selected { background: #336df4; color: #fff; border-radius: 8px; box-shadow: inset 0 0 0 2px #336df4, inset 0 0 0 3px #5f8cf6; }
.structure footer { height: 37px; border-top: 2px solid #dfdfdf; padding: 5px 18px; }

.center { width: 1110px; margin-left: 10px; flex: none; display: flex; flex-direction: column; gap: 9px; }
.scene { width: 1110px; height: 719px; stroke: none; stroke-linecap: butt; stroke-linejoin: miter; }
.tables { height: 571px; margin-right: 1px; }
.tabs { height: 53px; display: flex; flex: none; color: #1f1f1f; background: #ededed; letter-spacing: -.08px; }
.arrow { width: 52px; flex: none; display: flex; align-items: center; justify-content: center; padding-bottom: 2px; border-bottom: 1px solid #ddd; }
.arrow svg { width: 28px; height: 28px; overflow: visible; }
.tabs span { padding: 13px 0 0 2px; text-align: center; white-space: nowrap; flex: none; border-right: 2px solid #ccc; border-bottom: 1px solid #ccc; overflow: hidden; }
.tabs .t1 { width: 410px; background: #fff; border-bottom-color: #fff; }
.tabs .t2 { width: 568px; }
.tabs .t3 { width: 25px; border-right-color: #e2e2e2; }
table { margin: 33px 0 0 42px; width: 1023px; border-collapse: collapse; table-layout: fixed; font: 28px/31.700px "Liberation Serif", "Times New Roman", serif; letter-spacing: 1.2px; color: #222; text-align: center; }
td { border: 3px solid #000; padding: 4px 0 0; vertical-align: top; white-space: nowrap; }
.h1 { height: 45.500px; } .h2 { height: 157.500px; } .r { height: 77px; }
.r td { padding-top: 5px; }
.zoom { display: flex; align-items: center; margin: auto 10px 10px auto; height: 36px; }
.round { width: 34px; height: 34px; border: 1.500px solid #ddd; border-radius: 50%; }
.round svg { width: 31px; height: 31px; stroke-linecap: butt; }
.track { width: 316px; display: flex; align-items: center; padding-left: 17px; }
.fill { width: 32px; height: 4px; background: #336df4; }
.knob { width: 31px; height: 31px; border-radius: 50%; background: #fff; box-shadow: 0 2px 5px rgba(0,0,0,.28); }
.rest { width: 220px; height: 3px; background: #ececec; }

.right { width: 482px; height: 1299px; margin: 0 9px 0 9px; flex: none; display: flex; flex-direction: column; gap: 9.500px; }
.right .head { padding-left: 17px; }
.props { height: 426px; background: #ededed; }
.props .head { background: #fff; }
.prop-body { padding: 21px 12px 0 11.500px; color: #222; flex: 1; border: 1px solid #ddd; border-width: 1px 1px 4px; }
.prop-head { display: grid; grid-template-columns: 187px 1fr; height: 35px; line-height: 36px; }
.prop-head span:first-child { padding-left: 24px; border-right: 1.500px solid #dadada; }
.prop-head span + span { padding-left: 20px; }
.prop-list { margin-top: 7px; height: 291px; overflow: hidden; display: flex; flex-direction: column; gap: 3.500px; }
.prop { height: 42px; flex: none; background: #fff; border-radius: 6px 0 0 6px; display: grid; grid-template-columns: 183px 1fr; padding-left: 21px; line-height: 45px; white-space: nowrap; }
.docs { height: 298px; }
.doc { height: 84px; display: flex; align-items: center; gap: 10px; padding: 17px 0 0 31px; color: #222; letter-spacing: -.2px; }
.doc svg { width: 19px; height: 24px; }
.qrcode { flex: 1; }
.link { align-self: center; margin-top: 16px; color: #336df4; letter-spacing: -.15px; text-decoration: underline; text-decoration-thickness: 1.500px; }
.code { width: 349.500px; height: 349.500px; margin: 70px 0 0 65px; stroke-linecap: butt; }
```
